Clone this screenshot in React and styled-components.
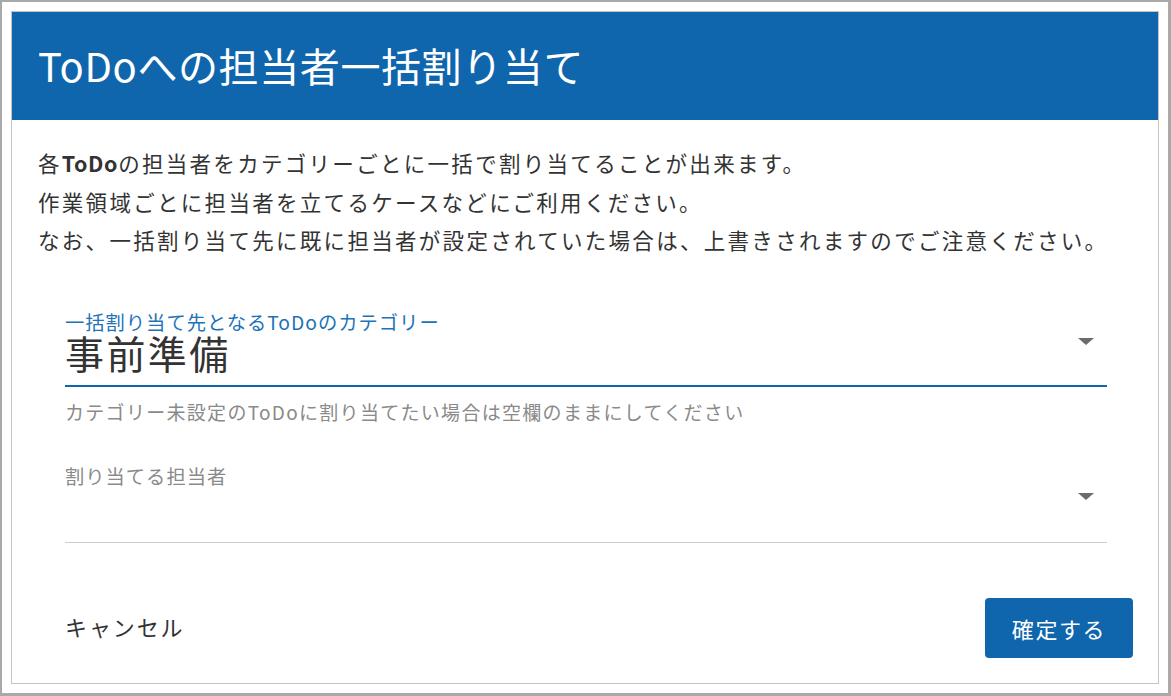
import styled, { createGlobalStyle } from 'styled-components';

const GlobalStyle = createGlobalStyle`
  body {
    margin: 0;
    font-family: "Noto Sans CJK JP", "Noto Sans", sans-serif;
    background: #ffffff;
  }
`;

const Frame = styled.div`
  width: 1171px;
  height: 696px;
  box-sizing: border-box;
  border: 2px solid #a9a9a9;
  border-right-width: 3px;
  border-bottom-width: 3px;
  padding: 9px;
  background: #ffffff;
`;

const Dialog = styled.div`
  height: 100%;
  box-sizing: border-box;
  border: 1px solid #c4c4c4;
  display: flex;
  flex-direction: column;
`;

const Header = styled.header`
  height: 108px;
  background: #1066ad;
  display: flex;
  align-items: center;
  padding-left: 26px;
`;

const Title = styled.h1`
  margin: 0;
  color: #ffffff;
  font-size: 40px;
  font-weight: 400;
  letter-spacing: 0.6px;
  line-height: 1;
  padding-bottom: 2px;
`;

const Body = styled.div`
  flex: 1;
  padding: 24px 51px 0 26px;
  display: flex;
  flex-direction: column;
`;

const Description = styled.p`
  margin: 0;
  color: #333333;
  font-size: 21.5px;
  letter-spacing: 2.3px;
  line-height: 38.5px;
  white-space: nowrap;

  b {
    font-weight: 700;
    letter-spacing: 0.6px;
  }
`;

const Form = styled.div`
  margin: 52px 0 0 27px;
  display: flex;
  flex-direction: column;
`;

const Field = styled.div`
  position: relative;
  margin-top: ${p => p.$gap || 0}px;
`;

const Label = styled.div`
  color: ${p => (p.$active ? '#2272b8' : '#8a8a8a')};
  font-size: 19.3px;
  letter-spacing: 1px;
  line-height: 20px;
`;

const Select = styled.div`
  position: relative;
  height: ${p => p.$height}px;
  border-bottom: ${p => (p.$active ? '2px solid #1066ad' : '1px solid #cdcdcd')};
  box-sizing: border-box;
`;

const Value = styled.div`
  color: #333333;
  font-size: 39px;
  letter-spacing: 2.4px;
  line-height: 40px;
`;

const Arrow = styled.span`
  position: absolute;
  right: 13px;
  top: ${p => p.$top}px;
  width: 0;
  height: 0;
  border-left: 8px solid transparent;
  border-right: 8px solid transparent;
  border-top: 7px solid #6b6b6b;
`;

const Helper = styled.div`
  margin-top: 14px;
  color: #8a8a8a;
  font-size: 19px;
  letter-spacing: 1.3px;
  line-height: 22px;
`;

const Footer = styled.footer`
  display: flex;
  justify-content: space-between;
  align-items: center;
  padding: 0 25px 25px 53px;
`;

const TextButton = styled.button`
  border: none;
  background: none;
  padding: 0 0 5px;
  color: #333333;
  font-family: inherit;
  font-size: 22px;
  letter-spacing: 1.9px;
  cursor: pointer;
`;

const PrimaryButton = styled.button`
  width: 148px;
  height: 60px;
  border: none;
  border-radius: 4px;
  background: #1066ad;
  color: #ffffff;
  font-family: inherit;
  font-size: 22px;
  letter-spacing: 1.6px;
  cursor: pointer;
`;

export default function App() {
  return (
    <>
      <GlobalStyle />
      <Frame>
        <Dialog>
          <Header>
            <Title>ToDoへの担当者一括割り当て</Title>
          </Header>
          <Body>
            <Description>
              各<b>ToDo</b>の担当者をカテゴリーごとに一括で割り当てることが出来ます。
              <br />
              作業領域ごとに担当者を立てるケースなどにご利用ください。
              <br />
              なお、一括割り当て先に既に担当者が設定されていた場合は、上書きされますのでご注意ください。
            </Description>
            <Form>
              <Field>
                <Label $active>一括割り当て先となるToDoのカテゴリー</Label>
                <Select $active $height={55}>
                  <Value>事前準備</Value>
                  <Arrow $top={6} />
                </Select>
                <Helper>カテゴリー未設定のToDoに割り当てたい場合は空欄のままにしてください</Helper>
              </Field>
              <Field $gap={43}>
                <Label>割り当てる担当者</Label>
                <Select $height={57}>
                  <Arrow $top={7} />
                </Select>
              </Field>
            </Form>
          </Body>
          <Footer>
            <TextButton>キャンセル</TextButton>
            <PrimaryButton>確定する</PrimaryButton>
          </Footer>
        </Dialog>
      </Frame>
    </>
  );
}
